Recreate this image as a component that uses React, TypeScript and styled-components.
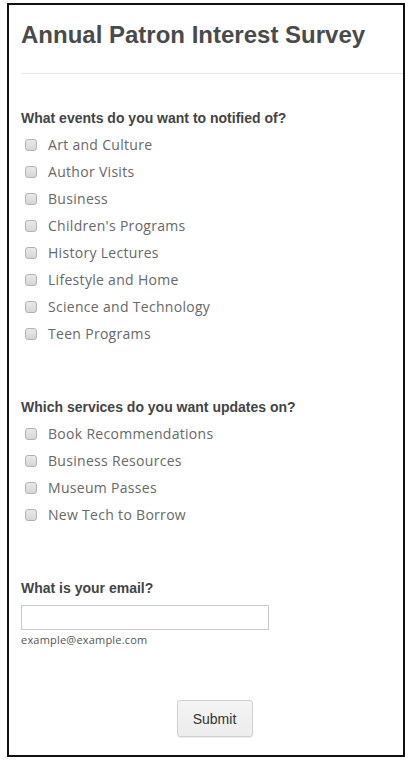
import styled, { createGlobalStyle } from 'styled-components';

const GlobalStyle = createGlobalStyle`
    html, body {
        margin: 0;
        padding: 0;
        background: #ffffff;
    }
`

const Frame = styled.div`
    box-sizing: border-box;
    width: 398px;
    height: 754px;
    margin: 3px 0 0 7px;
    border: 2px solid #111;
    padding: 0 0 0 12px;
    background: #fff;
`

const Title = styled.h1`
    margin: 0;
    padding-top: 15px;
    height: 68px;
    box-sizing: border-box;
    font-family: 'Liberation Sans', Arial, sans-serif;
    font-size: 24px;
    font-weight: bold;
    color: #4a4a4a;
    line-height: 30px;
`

const Divider = styled.hr`
    margin: 0;
    border: none;
    border-top: 1px solid #e6e6e6;
`

const Section = styled.fieldset`
    border: none;
    margin: 0;
    padding: ${p => p.$top}px 0 0 0;
`

const Question = styled.legend`
    float: left;
    width: 100%;
    padding: 0;
    margin-bottom: ${p => p.$gap ?? 4}px;
    font-family: 'Liberation Sans', Arial, sans-serif;
    font-size: 14px;
    font-weight: bold;
    color: #444;
    line-height: 16px;
`

const Options = styled.div`
    clear: both;
    display: flex;
    flex-direction: column;
`

const Option = styled.label`
    display: flex;
    align-items: center;
    height: 27px;
    font-family: 'Open Sans', 'DejaVu Sans', sans-serif;
    font-size: 14px;
    color: #686868;
    letter-spacing: 0.3px;
`

const Box = styled.input`
    appearance: none;
    box-sizing: border-box;
    width: 12px;
    height: 12px;
    margin: 0 11px 0 4px;
    border: 1px solid #b3b3b3;
    border-radius: 3px;
    background: linear-gradient(#e9e9e9, #d6d6d6);
`

const EmailInput = styled.input`
    display: block;
    box-sizing: border-box;
    width: 248px;
    height: 25px;
    margin: 0;
    border: 1px solid #c9c9c9;
    outline: none;
`

const Hint = styled.div`
    margin-top: 2px;
    font-family: 'Open Sans', 'DejaVu Sans', sans-serif;
    font-size: 11px;
    color: #555;
    letter-spacing: 0.2px;
`

const Actions = styled.div`
    display: flex;
    justify-content: center;
    padding: 53px 0 0 5px;
`

const SubmitBtn = styled.button`
    width: 76px;
    height: 37px;
    font-family: 'Liberation Sans', Arial, sans-serif;
    font-size: 14px;
    color: #333;
    background: linear-gradient(#f4f4f4, #ececec);
    border: 1px solid #d0d0d0;
    border-radius: 3px;
    box-shadow: 0 1px 1px rgba(0,0,0,0.08);
`

const events = [
    'Art and Culture',
    'Author Visits',
    'Business',
    "Children's Programs",
    'History Lectures',
    'Lifestyle and Home',
    'Science and Technology',
    'Teen Programs',
]

const services = [
    'Book Recommendations',
    'Business Resources',
    'Museum Passes',
    'New Tech to Borrow',
]

function App() {
    return (
        <>
            <GlobalStyle />
            <Frame>
                <Title>Annual Patron Interest Survey</Title>
                <Divider />
                <Section $top={36}>
                    <Question $gap={5}>What events do you want to notified of?</Question>
                    <Options>
                        {events.map(e => (
                            <Option key={e}><Box type="checkbox" />{e}</Option>
                        ))}
                    </Options>
                </Section>
                <Section $top={52}>
                    <Question $gap={5}>Which services do you want updates on?</Question>
                    <Options>
                        {services.map(s => (
                            <Option key={s}><Box type="checkbox" />{s}</Option>
                        ))}
                    </Options>
                </Section>
                <Section $top={52}>
                    <Question $gap={9}>What is your email?</Question>
                    <Options>
                        <EmailInput type="email" />
                        <Hint>example@example.com</Hint>
                    </Options>
                </Section>
                <Actions>
                    <SubmitBtn type="submit">Submit</SubmitBtn>
                </Actions>
            </Frame>
        </>
    )
}

export default App
